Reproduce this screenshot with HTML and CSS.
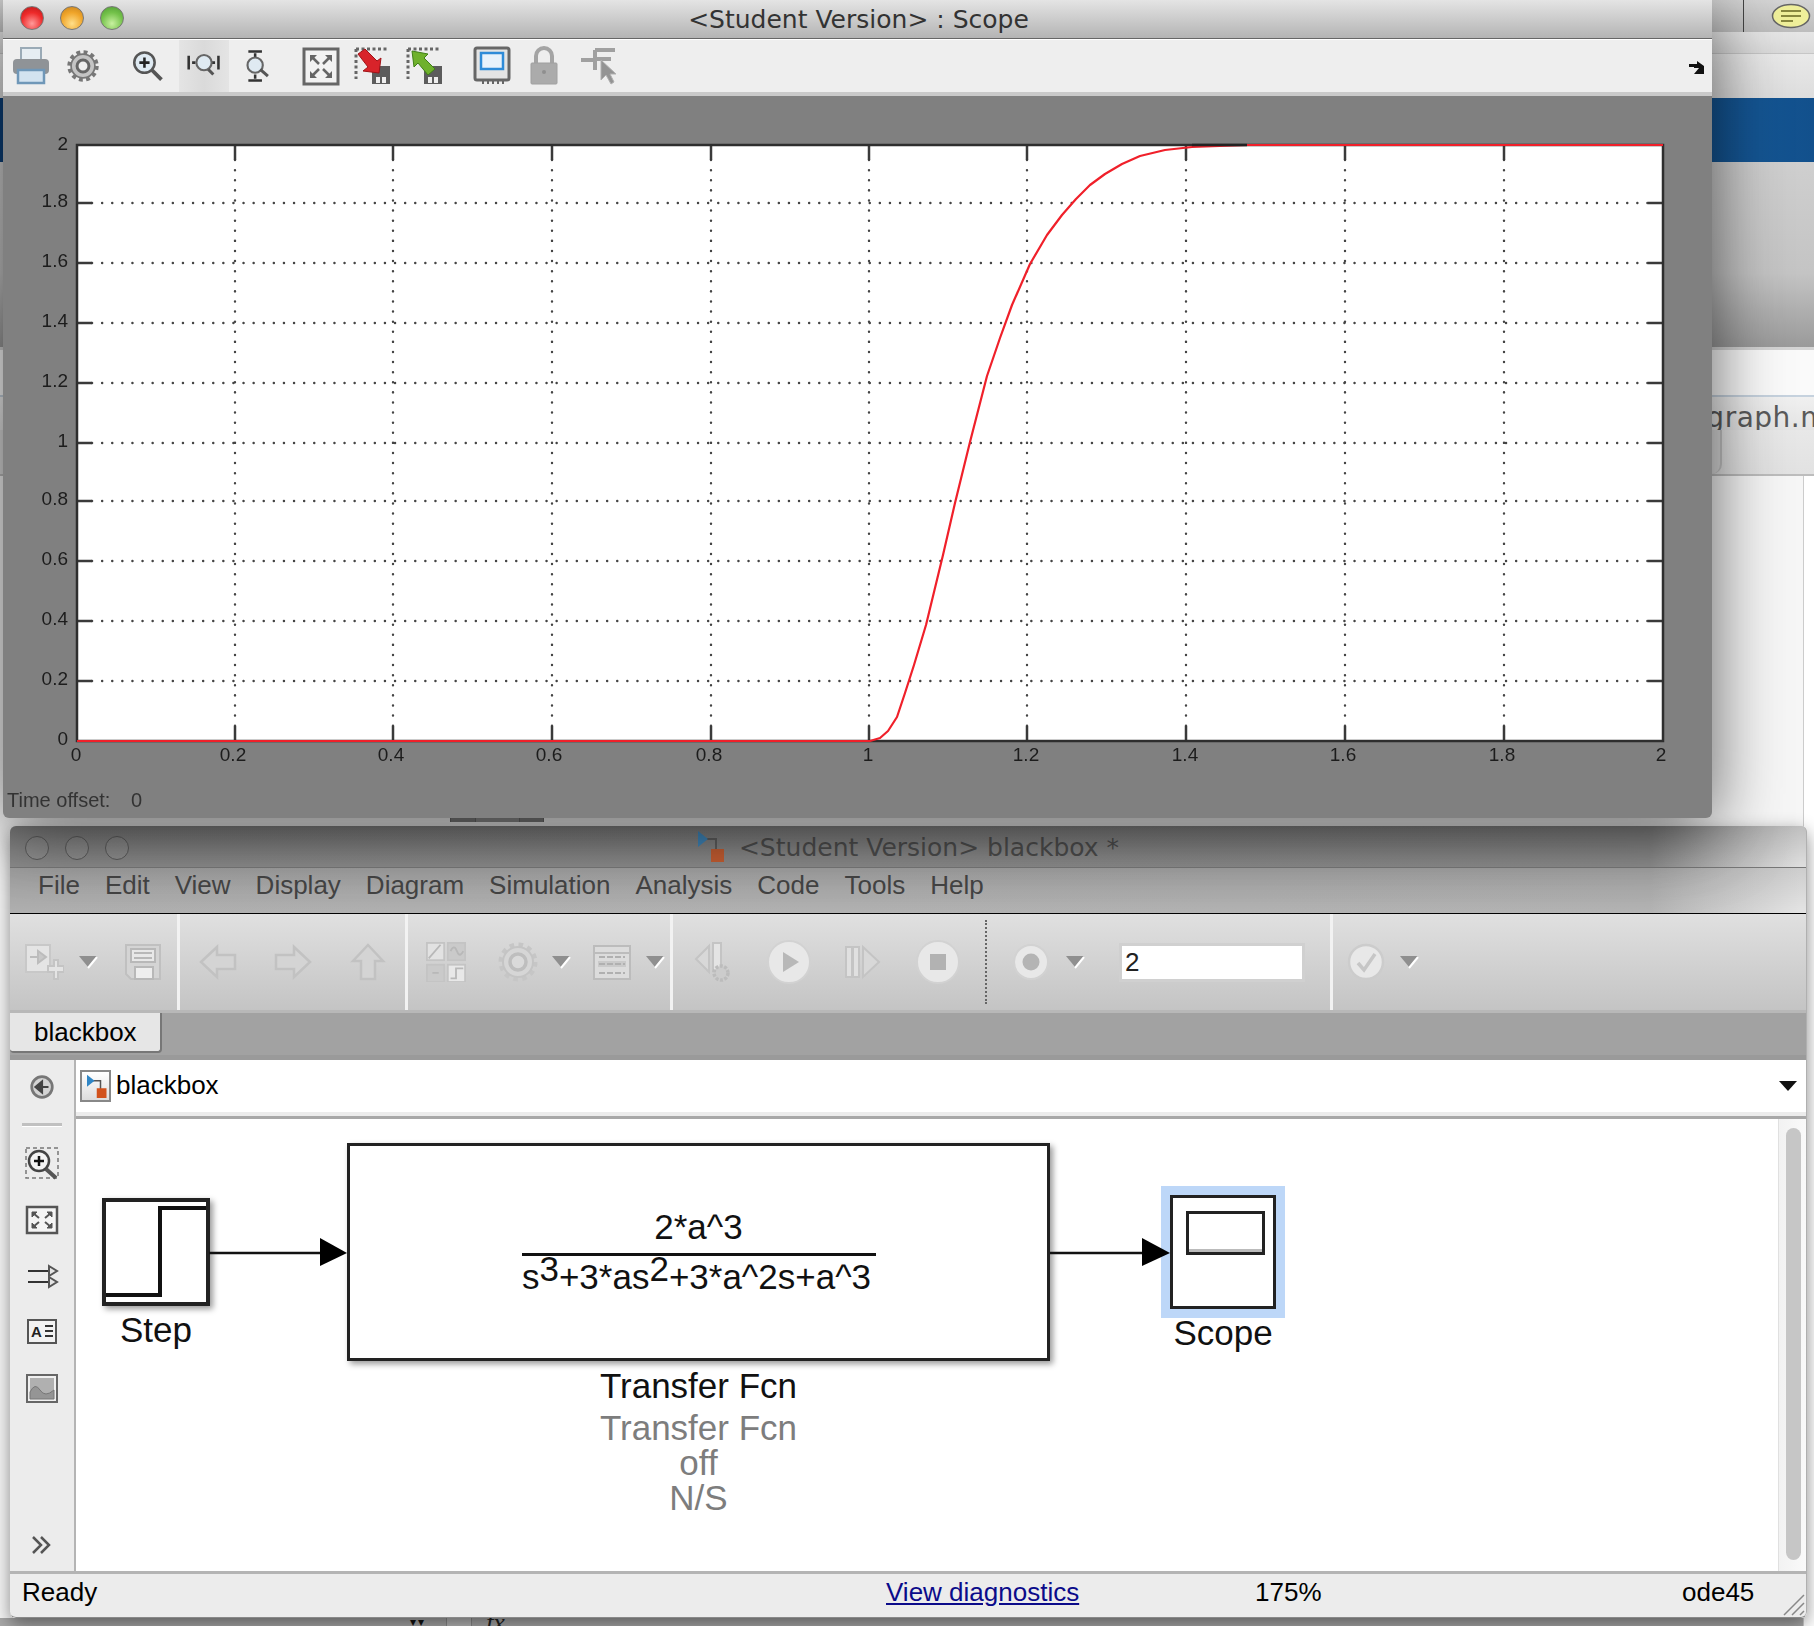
FILE: index.html
```html
<!DOCTYPE html>
<html lang="en">
<head>
    <meta charset="UTF-8">
    <title>blackbox - Scope</title>
    <link rel="stylesheet" href="styles.css">
</head>
<body>
    <svg class="defs" width="0" height="0">
        <defs>
            <symbol id="drop" viewBox="0 0 20 14">
                <polygon points="1,1 19,1 10,12" fill="#8f8f8f"/>
                <polyline points="19,2 10,13" fill="none" stroke="#fff" stroke-width="2"/>
            </symbol>
            <symbol id="model" viewBox="0 0 32 32">
                <path d="M8 9H22V20" fill="none" stroke="#555" stroke-width="2"/>
                <polygon points="4,1 14,9 4,17" fill="#2f86c6"/>
                <rect x="17" y="19" width="13" height="13" fill="#d2521c"/>
            </symbol>
            <symbol id="rulers" viewBox="0 0 40 40">
                <path d="M3 3H36M3 3V33" fill="none" stroke="#666" stroke-width="3" stroke-dasharray="3 2.5"/>
                <rect x="19" y="20" width="18" height="18" fill="#5c5c5c"/>
                <rect x="23" y="31" width="4" height="6" fill="#eee"/>
                <rect x="29" y="31" width="4" height="6" fill="#eee"/>
            </symbol>
        </defs>
    </svg>

    <!-- window behind the two simulink windows -->
    <div class="backwin">
        <div class="back-top">
            <span class="back-rule"></span>
            <svg class="note" width="40" height="26" viewBox="0 0 40 26">
                <ellipse cx="20" cy="13" rx="18.5" ry="11.5" fill="#efef9a" stroke="#666" stroke-width="1.5"/>
                <path d="M10 8H30M10 13H30M10 18H22" stroke="#88883f" stroke-width="2"/>
            </svg>
        </div>
        <div class="back-strip1"></div>
        <div class="back-strip2"></div>
        <div class="back-blue"></div>
        <div class="back-gray"></div>
        <div class="back-white"></div>
        <div class="back-file"><span class="filename">graph.m</span></div>
        <div class="back-tabs"><span class="back-tab"></span></div>
        <div class="back-body">
            <div class="frag-row">
                <span class="frag frag-a"></span>
                <span class="frag frag-b"></span>
            </div>
            <div class="frag-bottom">
                <span class="frag-down">▾▾</span>
                <span class="frag-cell"></span>
                <span class="frag-fx">fx</span>
            </div>
        </div>
    </div>

    <!-- blackbox model window -->
    <div class="window model-win">
        <div class="model-title">
            <div class="lights">
                <span class="light dim"></span>
                <span class="light dim"></span>
                <span class="light dim"></span>
            </div>
            <div class="model-caption">
                <svg class="icon-title" width="32" height="32"><use href="#model"/></svg>
                <span>&lt;Student Version&gt; blackbox *</span>
            </div>
        </div>
        <div class="menubar">
            <span>File</span><span>Edit</span><span>View</span><span>Display</span><span>Diagram</span>
            <span>Simulation</span><span>Analysis</span><span>Code</span><span>Tools</span><span>Help</span>
        </div>

        <div class="toolbar">
            <div class="tgroup g1">
                <svg class="ico" viewBox="0 0 40 40"><path d="M2 3H26V30H2Z" fill="#e4e4e4" stroke="#c8c8c8" stroke-width="2"/><path d="M6 15H14M14 9V21L22 15Z" fill="#c8c8c8" stroke="#bcbcbc" stroke-width="2"/><path d="M24 24H30V18H34V24H40V30H34V37H30V30H24Z" fill="#e4e4e4" stroke="#c4c4c4" stroke-width="2"/></svg>
                <svg class="drop"><use href="#drop"/></svg>
                <svg class="ico ml-save" viewBox="0 0 40 40"><path d="M3 3H37V37H8L3 32Z" fill="#d4d4d4" stroke="#c0c0c0" stroke-width="2"/><rect x="8" y="7" width="24" height="13" fill="#e8e8e8" stroke="#b8b8b8" stroke-width="2"/><path d="M11 11H29M11 16H29" stroke="#b8b8b8" stroke-width="2"/><rect x="12" y="25" width="18" height="12" fill="#eee" stroke="#b8b8b8" stroke-width="2"/></svg>
            </div>
            <div class="tgroup g2">
                <svg class="ico" viewBox="0 0 40 40"><path d="M3 20L19 5V13H37V27H19V35Z" fill="#d4d4d4" stroke="#c2c2c2" stroke-width="2.5"/></svg>
                <svg class="ico" viewBox="0 0 40 40"><path d="M37 20L21 5V13H3V27H21V35Z" fill="#d4d4d4" stroke="#c2c2c2" stroke-width="2.5"/></svg>
                <svg class="ico" viewBox="0 0 40 40"><path d="M20 3L35 19H27V37H13V19H5Z" fill="#d4d4d4" stroke="#c2c2c2" stroke-width="2.5"/></svg>
            </div>
            <div class="tgroup g3">
                <svg class="ico" viewBox="0 0 44 44"><rect x="1" y="1" width="19" height="19" fill="#e2e2e2" stroke="#c4c4c4" stroke-width="2"/><rect x="24" y="1" width="19" height="19" fill="#cacaca" stroke="#c4c4c4" stroke-width="2"/><rect x="1" y="25" width="19" height="19" fill="#cacaca" stroke="#c4c4c4" stroke-width="2"/><rect x="24" y="25" width="19" height="19" fill="#e8e8e8" stroke="#c4c4c4" stroke-width="2"/><path d="M3 18L16 3M27 10Q31 2 34 10T41 10M7 34H14M27 40H33V29H41" fill="none" stroke="#b8b8b8" stroke-width="2"/></svg>
                <svg class="ico ml-gear" viewBox="0 0 40 40"><circle cx="20" cy="20" r="17" fill="none" stroke="#c6c6c6" stroke-width="5" stroke-dasharray="4.5 4.4"/><circle cx="20" cy="20" r="15" fill="#d6d6d6" stroke="#c4c4c4" stroke-width="2"/><circle cx="20" cy="20" r="8" fill="#dadada" stroke="#bebebe" stroke-width="3.5"/></svg>
                <svg class="drop"><use href="#drop"/></svg>
                <svg class="ico ml-table" viewBox="0 0 40 40"><rect x="2" y="4" width="36" height="33" fill="#dcdcdc" stroke="#bcbcbc" stroke-width="2"/><path d="M2 11H38" stroke="#bcbcbc" stroke-width="2"/><rect x="6" y="19" width="28" height="6" fill="#cacaca"/><path d="M7 15H33M7 31H33M7 22H33" fill="none" stroke="#b0b0b0" stroke-width="2" stroke-dasharray="6 2"/></svg>
                <svg class="drop"><use href="#drop"/></svg>
            </div>
            <div class="tgroup g4">
                <svg class="ico" viewBox="0 0 40 40"><path d="M2 17L15 4V30Z" fill="#d8d8d8" stroke="#c4c4c4" stroke-width="2"/><rect x="19" y="1" width="8" height="28" fill="#e4e4e4" stroke="#c4c4c4" stroke-width="2"/><circle cx="27" cy="31" r="7" fill="#cccccc" stroke="#bcbcbc" stroke-width="3.5" stroke-dasharray="3 1.5"/></svg>
                <svg class="roundbtn" viewBox="0 0 44 44"><circle cx="22" cy="22" r="21" fill="#e8e8e8" stroke="#d2d2d2" stroke-width="2"/><polygon points="16,12 32,22 16,32" fill="#b8b8b8"/></svg>
                <svg class="ico ml-step" viewBox="0 0 40 40"><rect x="3" y="5" width="6" height="30" fill="#e0e0e0" stroke="#c4c4c4" stroke-width="2"/><rect x="10" y="5" width="6" height="30" fill="#e0e0e0" stroke="#c4c4c4" stroke-width="2"/><path d="M20 5L36 20L20 35Z" fill="#d8d8d8" stroke="#c4c4c4" stroke-width="2"/></svg>
                <svg class="roundbtn ml-stop" viewBox="0 0 44 44"><circle cx="22" cy="22" r="21" fill="#e8e8e8" stroke="#d2d2d2" stroke-width="2"/><rect x="14" y="14" width="16" height="16" fill="#b2b2b2"/></svg>
                <span class="dots"></span>
                <svg class="ico ml-rec" viewBox="0 0 40 40"><circle cx="20" cy="20" r="17" fill="#e8e8e8" stroke="#d2d2d2" stroke-width="2"/><circle cx="20" cy="20" r="8.5" fill="#b4b4b4"/></svg>
                <svg class="drop ml-drop"><use href="#drop"/></svg>
                <div class="stoptime">2</div>
            </div>
            <div class="tgroup g5">
                <svg class="ico" viewBox="0 0 40 40"><circle cx="20" cy="20" r="17" fill="#e8e8e8" stroke="#cccccc" stroke-width="2.5"/><path d="M12 21L18 28L29 12" fill="none" stroke="#c6c6c6" stroke-width="3.5"/></svg>
                <svg class="drop"><use href="#drop"/></svg>
            </div>
        </div>

        <div class="tabbar"><div class="tab">blackbox</div></div>

        <div class="main">
            <div class="rail">
                <svg class="rail-back" viewBox="0 0 24 24"><circle cx="12" cy="12" r="9.5" fill="#d4d4d4" stroke="#777" stroke-width="2.5"/><path d="M18 12H11M12 7L6 12L12 17Z" fill="#444" stroke="#444" stroke-width="2"/></svg>
                <span class="rail-sep"></span>
                <svg class="rail-ico" viewBox="0 0 36 36"><rect x="2" y="2" width="32" height="30" fill="none" stroke="#777" stroke-width="1.5" stroke-dasharray="4 3"/><circle cx="15" cy="15" r="10" fill="#f4f4f4" stroke="#444" stroke-width="2.5"/><path d="M10 15H20M15 10V20" stroke="#111" stroke-width="2.5"/><path d="M22 23L32 32" stroke="#555" stroke-width="4"/></svg>
                <svg class="rail-ico" viewBox="0 0 36 36"><rect x="3" y="5" width="30" height="26" fill="#f4f4f4" stroke="#555" stroke-width="2.5"/><path d="M8 10H13L8 15ZM28 10H23L28 15ZM8 26H13L8 21ZM28 26H23L28 21Z" fill="#555" stroke="#555"/><path d="M9 11L15 16M27 11L21 16M9 25L15 20M27 25L21 20" stroke="#555" stroke-width="2"/></svg>
                <svg class="rail-ico" viewBox="0 0 36 36"><path d="M4 13H28M4 24H28" stroke="#333" stroke-width="2"/><path d="M25 8L33 13L25 18ZM25 19L33 24L25 29Z" fill="#e4e4e4" stroke="#555" stroke-width="2"/></svg>
                <svg class="rail-ico" viewBox="0 0 36 36"><rect x="4" y="6" width="28" height="23" fill="#f2f2f2" stroke="#555" stroke-width="2"/><text class="rail-a" x="7" y="23">A</text><path d="M21 12H29M21 17H29M21 22H29" stroke="#333" stroke-width="2"/></svg>
                <svg class="rail-ico" viewBox="0 0 36 36"><rect x="3" y="5" width="30" height="27" fill="#f0f0f0" stroke="#666" stroke-width="2"/><rect x="6" y="8" width="24" height="21" fill="#b0b0b0"/><path d="M6 22Q11 12 16 20T30 20V29H6Z" fill="#959595" stroke="#777"/></svg>
                <svg class="rail-more" viewBox="0 0 24 24"><path d="M3 4L11 12L3 20M11 4L19 12L11 20" fill="none" stroke="#555" stroke-width="2.5"/></svg>
            </div>

            <div class="work">
                <div class="address">
                    <span class="addr-icon"><svg width="24" height="24"><use href="#model"/></svg></span>
                    <span class="addr-name">blackbox</span>
                    <svg class="addr-drop" width="18" height="10"><polygon points="0,0 18,0 9,10" fill="#111"/></svg>
                </div>
                <div class="canvas-row">
                    <div class="canvas">
                        <svg class="wires" width="1200" height="300">
                            <path d="M133 135H246M974 135H1068" stroke="#111" stroke-width="2.5"/>
                            <polygon points="244,120 271,135 244,148" fill="#000"/>
                            <polygon points="1066,120 1094,135 1066,148" fill="#000"/>
                        </svg>
                        <div class="node step-node">
                            <div class="block step-block">
                                <svg width="100" height="100" viewBox="0 0 100 100">
                                    <path d="M0 93H54V6H100" fill="none" stroke="#111" stroke-width="4"/>
                                </svg>
                            </div>
                            <div class="label">Step</div>
                        </div>
                        <div class="node tf-node">
                            <div class="block tf-block">
                                <div class="num">2*a^3</div>
                                <div class="den">s<sup>3</sup>+3*as<sup>2</sup>+3*a^2s+a^3</div>
                            </div>
                            <div class="label tf-label">Transfer Fcn</div>
                            <div class="label note-label first">Transfer Fcn</div>
                            <div class="label note-label">off</div>
                            <div class="label note-label">N/S</div>
                        </div>
                        <div class="node scope-node">
                            <div class="block scope-block"><div class="scope-screen"></div></div>
                            <div class="label">Scope</div>
                        </div>
                    </div>
                    <div class="scrollbar"><div class="thumb"></div></div>
                </div>
            </div>
        </div>

        <div class="statusbar">
            <span class="status-ready">Ready</span>
            <a class="diag" href="#">View diagnostics</a>
            <span>175%</span>
            <span>ode45</span>
            <svg class="grip" width="24" height="24" viewBox="0 0 24 24"><path d="M2 22L22 2M10 22L22 10M18 22L22 18" stroke="#888" stroke-width="1.5"/></svg>
        </div>
    </div>

    <!-- scope window, on top -->
    <div class="window scope-win">
        <div class="scope-title">
            <div class="lights">
                <span class="light red"></span>
                <span class="light orange"></span>
                <span class="light green"></span>
            </div>
            <span class="scope-caption">&lt;Student Version&gt; : Scope</span>
        </div>
        <div class="scope-tools">
            <svg class="ico" viewBox="0 0 40 40"><rect x="10" y="2" width="20" height="14" fill="#e6edf2" stroke="#9aaab6" stroke-width="2"/><rect x="2" y="13" width="36" height="15" rx="4" fill="#8f9397"/><rect x="7" y="24" width="26" height="13" fill="#d3e3f0" stroke="#6f97b8" stroke-width="2.5"/></svg>
            <svg class="ico ico-sm" viewBox="0 0 40 40"><circle cx="20" cy="20" r="16" fill="none" stroke="#777" stroke-width="5" stroke-dasharray="4.5 3.9"/><circle cx="20" cy="20" r="14" fill="#c4c4c4" stroke="#777" stroke-width="2"/><circle cx="20" cy="20" r="7" fill="#efefef" stroke="#666" stroke-width="3.5"/></svg>
            <svg class="ico ico-sm tools-gap" viewBox="0 0 40 40"><circle cx="17" cy="16" r="12" fill="#dfeaf2" stroke="#555" stroke-width="3"/><path d="M11 16H23M17 10V22" stroke="#222" stroke-width="3"/><path d="M26 25L37 36" stroke="#555" stroke-width="4.5"/></svg>
            <span class="pressed">
                <svg class="ico ico-sm" viewBox="0 0 40 40"><path d="M2 8V24M37 8V24" stroke="#333" stroke-width="3"/><path d="M6 16H10M29 16H33" stroke="#333" stroke-width="3"/><circle cx="20" cy="16" r="9" fill="#dfeaf2" stroke="#666" stroke-width="2.5"/><path d="M25 24L31 30" stroke="#555" stroke-width="3.5"/></svg>
            </span>
            <svg class="ico ico-sm" viewBox="0 0 40 40"><path d="M11 3H27M11 37H27" stroke="#333" stroke-width="3"/><path d="M19 5V10M19 30V35" stroke="#333" stroke-width="3"/><circle cx="19" cy="19" r="9" fill="#dfeaf2" stroke="#666" stroke-width="2.5"/><path d="M25 24L34 32" stroke="#555" stroke-width="3.5"/></svg>
            <svg class="ico tools-gap2" viewBox="0 0 40 40"><rect x="3" y="3" width="34" height="35" fill="#f2f2f2" stroke="#666" stroke-width="3"/><path d="M9 9H16L9 16ZM31 9H24L31 16ZM9 32H16L9 25ZM31 32H24L31 25Z" fill="#666"/><path d="M10 10L18 18M30 10L22 18M10 31L18 23M30 31L22 23" stroke="#666" stroke-width="2.5"/></svg>
            <svg class="ico" viewBox="0 0 40 40"><use href="#rulers"/><path d="M5 8L12 3L24 15L28 12L26 27L10 25L15 21Z" fill="#d8232a" stroke="#a01217"/></svg>
            <svg class="ico" viewBox="0 0 40 40"><use href="#rulers"/><path d="M7 5L23 8L19 12L30 23L23 29L13 17L9 21Z" fill="#6fb12c" stroke="#3f7f17"/></svg>
            <svg class="ico tools-gap" viewBox="0 0 40 40"><rect x="3" y="2" width="34" height="32" rx="2" fill="#e4e4e4" stroke="#666" stroke-width="3"/><rect x="9" y="7" width="22" height="16" fill="#e8f2fb" stroke="#2e8bd8" stroke-width="2.5"/><path d="M11 34V38M16 34V38M21 34V38M26 34V38M31 34V38" stroke="#666" stroke-width="2"/></svg>
            <svg class="ico" viewBox="0 0 40 40"><path d="M12 18V10A8 8 0 0 1 28 10V18" fill="none" stroke="#a4a4a4" stroke-width="4"/><rect x="7" y="17" width="26" height="21" rx="1" fill="#ababab" stroke="#a0a0a0"/><circle cx="20" cy="26" r="2" fill="#8f8f8f"/></svg>
            <svg class="ico tools-gap3" viewBox="0 0 40 40"><path d="M2 14H16M16 4H36M16 4V24M16 13H32" fill="none" stroke="#a0a0a0" stroke-width="4"/><path d="M22 14V34L27 29L32 38L35 36L31 28H37Z" fill="#939393" stroke="#b0b0b0"/></svg>
            <svg class="dock" width="18" height="16" viewBox="0 0 18 16"><path d="M1 4H9V1L16 6V14H6L11 8H6V7H1Z" fill="#111"/></svg>
        </div>
        <div class="figure">
            <svg class="plot" width="1709" height="722" viewBox="3 96 1709 722">
                <rect x="77" y="145" width="1586" height="596" fill="#fff"/>
                <path class="grid" d="M235 160V726M393 160V726M552 160V726M711 160V726M869 160V726M1027 160V726M1186 160V726M1345 160V726M1504 160V726"/>
                <path class="grid" d="M92 203H1648M92 263H1648M92 323H1648M92 383H1648M92 443H1648M92 501H1648M92 561H1648M92 621H1648M92 681H1648"/>
                <path class="ticks" d="M235 145V160M393 145V160M552 145V160M711 145V160M869 145V160M1027 145V160M1186 145V160M1345 145V160M1504 145V160M235 741V726M393 741V726M552 741V726M711 741V726M869 741V726M1027 741V726M1186 741V726M1345 741V726M1504 741V726"/>
                <path class="ticks" d="M77 203H92M77 263H92M77 323H92M77 383H92M77 443H92M77 501H92M77 561H92M77 621H92M77 681H92M1663 203H1648M1663 263H1648M1663 323H1648M1663 383H1648M1663 443H1648M1663 501H1648M1663 561H1648M1663 621H1648M1663 681H1648"/>
                <rect class="axes" x="77" y="145" width="1586" height="596"/>
                <polyline class="trace" points="77,741 870,741 880,738 888,731 897,717 905,693 914,665 926,625 943,555 955,503 970,442 987,376 1000,338 1012,305 1030,264 1047,235 1062,215 1076,199 1090,185 1105,174 1122,164 1140,156 1165,150 1192,147 1247,145 1663,145"/>
                <path class="axis-dark" d="M1192 145H1247"/>
                <g class="ylabels">
                    <text x="68" y="150">2</text><text x="68" y="207">1.8</text><text x="68" y="267">1.6</text><text x="68" y="327">1.4</text><text x="68" y="387">1.2</text><text x="68" y="447">1</text><text x="68" y="505">0.8</text><text x="68" y="565">0.6</text><text x="68" y="625">0.4</text><text x="68" y="685">0.2</text><text x="68" y="745">0</text>
                </g>
                <g class="xlabels">
                    <text x="76" y="761">0</text><text x="233" y="761">0.2</text><text x="391" y="761">0.4</text><text x="549" y="761">0.6</text><text x="709" y="761">0.8</text><text x="868" y="761">1</text><text x="1026" y="761">1.2</text><text x="1185" y="761">1.4</text><text x="1343" y="761">1.6</text><text x="1502" y="761">1.8</text><text x="1661" y="761">2</text>
                </g>
                <text class="offset" x="7" y="807">Time offset:</text>
                <text class="offset" x="131" y="807">0</text>
            </svg>
        </div>
    </div>
</body>
</html>
```

FILE: styles.css
```css
html, body {
    margin: 0;
    padding: 0;
}
body {
    position: relative;
    width: 1814px;
    height: 1626px;
    overflow: hidden;
    background: #f6f6f6;
    font-family: "Liberation Sans", Arial, sans-serif;
}
svg {
    display: block;
    flex: none;
}
.defs {
    position: absolute;
}

/* window in the back */
.backwin {
    position: absolute;
    inset: 0;
    display: flex;
    flex-direction: column;
}
.back-top {
    height: 32px;
    background: linear-gradient(#d4d4d4, #bdbdbd);
    display: flex;
    justify-content: flex-end;
    align-items: center;
    padding-right: 3px;
}
.back-rule {
    width: 1px;
    height: 32px;
    background: #444;
    margin-right: 27px;
}
.back-strip1 {
    height: 21px;
    background: linear-gradient(#e6e6e6, #dadada);
}
.back-strip2 {
    height: 44px;
    background: linear-gradient(#e9e9e9, #dddddd);
    border-top: 1px solid #c6c6c6;
}
.back-blue {
    height: 64px;
    background: linear-gradient(90deg, #0c3f77, #145593 1760px, #12508c);
}
.back-gray {
    height: 185px;
    background: linear-gradient(#cfcfcf, #c4c4c4 60%, #9a9a9a);
}
.back-white {
    height: 45px;
    background: #fafafa;
    border-top: 3px solid #d4d4d4;
}
.back-file {
    height: 33px;
    background: linear-gradient(#f0f0f0, #e4e4e4);
    border-top: 2px solid #c6d2de;
    display: flex;
    justify-content: flex-end;
}
.filename {
    font-family: "DejaVu Sans", sans-serif;
    font-size: 28px;
    line-height: 33px;
    color: #5a5a5a;
    margin-top: 4px;
    margin-right: -14px;
    letter-spacing: 0.5px;
}
.back-tabs {
    height: 44px;
    background: linear-gradient(#e8e8e8, #e2e2e2);
    border-bottom: 2px solid #bdbdbd;
}
.back-tab {
    display: block;
    width: 1722px;
    height: 44px;
    background: #dcdcdc;
    border-right: 2px solid #c4c4c4;
    border-bottom-right-radius: 10px;
    box-sizing: border-box;
}
.back-body {
    flex: 1;
    background: #f6f6f6;
    position: relative;
    border-right: 10px solid #fff;
    display: flex;
    flex-direction: column;
    justify-content: space-between;
}
.back-body::after {
    content: "";
    position: absolute;
    top: 0;
    bottom: 0;
    right: 0;
    width: 1px;
    background: #ccc;
}
.frag-row {
    display: flex;
    margin-top: 338px;
    margin-left: 450px;
    height: 8px;
    background: #8f8f8f;
    width: 94px;
}
.frag {
    display: block;
    height: 8px;
    border-left: 1px solid #6a6a6a;
    border-right: 1px solid #6a6a6a;
}
.frag-a {
    width: 24px;
    background: #7e7e7e;
}
.frag-b {
    width: 24px;
    margin-left: 43px;
    background: #7e7e7e;
}
.frag-bottom {
    height: 8px;
    background: #a8a8a8;
    display: flex;
    align-items: flex-start;
    overflow: hidden;
    padding-left: 410px;
}
.frag-down {
    font-size: 12px;
    line-height: 8px;
    color: #111;
    letter-spacing: 2px;
}
.frag-cell {
    width: 24px;
    height: 8px;
    margin-left: 20px;
    background: #b8b8b8;
    border-left: 1px solid #8a8a8a;
    border-right: 1px solid #8a8a8a;
}
.frag-fx {
    font-family: "Liberation Serif", serif;
    font-style: italic;
    font-size: 26px;
    line-height: 10px;
    margin-left: 14px;
    color: #222;
}

/* windows */
.window {
    position: absolute;
    display: flex;
    flex-direction: column;
}
.scope-win {
    left: 3px;
    top: 0;
    width: 1709px;
    height: 818px;
    border-radius: 0 0 6px 6px;
    background: #808080;
    box-shadow: 0 10px 70px rgba(0, 0, 0, 0.62);
}
.model-win {
    left: 10px;
    top: 826px;
    width: 1797px;
    height: 792px;
    border-radius: 6px 6px 6px 6px;
    background: #ececec;
    box-shadow: 0 6px 18px rgba(0, 0, 0, 0.45);
    overflow: hidden;
}
.model-win::after {
    content: "";
    position: absolute;
    inset: 0;
    border-radius: 6px;
    border-right: 1px solid #b0b0b0;
    border-bottom: 1px solid #8a8a8a;
    pointer-events: none;
}

/* title bars */
.scope-title {
    height: 38px;
    flex: none;
    position: relative;
    display: flex;
    justify-content: center;
    align-items: center;
    background: linear-gradient(#e4e4e4, #b4b4b4);
    border-bottom: 1px solid #666;
}
.scope-caption {
    font-family: "DejaVu Sans", sans-serif;
    font-size: 25px;
    color: #333;
    margin-left: 2px;
}
.lights {
    position: absolute;
    left: 17px;
    top: 6px;
    display: flex;
    gap: 16px;
}
.light {
    display: block;
    width: 24px;
    height: 24px;
    border-radius: 50%;
    border: 1px solid #777;
    box-sizing: border-box;
}
.red {
    background: radial-gradient(circle at 50% 75%, #ff9a9a, #ee2a2a 55%, #b81818);
}
.orange {
    background: radial-gradient(circle at 50% 75%, #ffdf8a, #f0a52a 55%, #c4801c);
}
.green {
    background: radial-gradient(circle at 50% 75%, #c8f0a0, #74c24a 55%, #4e9a34);
}
.model-title {
    height: 42px;
    flex: none;
    position: relative;
    display: flex;
    justify-content: center;
    align-items: center;
    padding-top: 2px;
    border-bottom: 1px solid #777;
    box-sizing: border-box;
    background:
        linear-gradient(rgba(0, 0, 0, 0.14), rgba(0, 0, 0, 0)),
        linear-gradient(90deg, #8c8c8c, #8e8e8e 1640px, #dedede 1790px);
}
.model-title .lights {
    left: 15px;
    top: 10px;
}
.dim {
    background: rgba(255, 255, 255, 0.06);
    border-color: #5a5a5a;
}
.model-caption {
    display: flex;
    align-items: center;
    gap: 13px;
    font-family: "DejaVu Sans", sans-serif;
    font-size: 25px;
    color: #4c4c4c;
    margin-left: -4px;
}
.icon-title {
    opacity: 0.8;
    margin-top: -4px;
}
.menubar {
    height: 45px;
    flex: none;
    box-sizing: content-box;
    display: flex;
    align-items: center;
    gap: 25px;
    padding-left: 28px;
    font-size: 26px;
    color: #444;
    border-bottom: 1px solid #000;
    background:
        linear-gradient(rgba(0, 0, 0, 0.1), rgba(0, 0, 0, 0)),
        linear-gradient(90deg, #b0b0b0, #b4b4b4 1640px, #e4e4e4 1790px);
}
.menubar span {
    margin-top: -10px;
}

/* toolbars */
.ico {
    width: 40px;
    height: 40px;
}
.ico-sm {
    width: 34px;
    height: 34px;
    margin: 3px;
}
.drop {
    width: 20px;
    height: 14px;
}
.toolbar {
    height: 96px;
    flex: none;
    display: flex;
    background: linear-gradient(#e0e0e0, #c4c4c4);
}
.tgroup {
    display: flex;
    align-items: center;
    border-right: 3px solid #f2f2f2;
    box-sizing: border-box;
}
.g1 {
    width: 170px;
    padding-left: 14px;
    gap: 14px;
}
.ml-save {
    margin-left: 11px;
}
.g2 {
    width: 228px;
    padding-left: 18px;
    gap: 35px;
}
.g3 {
    width: 265px;
    padding-left: 18px;
    gap: 13px;
}
.ml-gear {
    margin-left: 19px;
}
.ml-table {
    margin-left: 8px;
}
.g4 {
    width: 660px;
    padding-left: 21px;
    gap: 33px;
}
.roundbtn {
    width: 44px;
    height: 44px;
}
.ml-step {
    margin-left: -1px;
}
.ml-stop {
    margin-left: 0;
}
.dots {
    display: block;
    height: 84px;
    border-left: 2px dotted #666;
    margin-left: -8px;
}
.ml-rec {
    margin-left: -9px;
}
.ml-drop {
    margin-left: -19px;
}
.stoptime {
    width: 186px;
    height: 39px;
    margin-left: 1px;
    box-sizing: border-box;
    border: 3px solid #d0d0d0;
    background: #fff;
    font-size: 26px;
    line-height: 33px;
    padding-left: 3px;
    color: #222;
}
.g5 {
    flex: 1;
    border-right: 0;
    padding-left: 13px;
    gap: 13px;
}
.scope-tools {
    height: 57px;
    flex: none;
    box-sizing: border-box;
    display: flex;
    align-items: center;
    gap: 12px;
    padding: 0 0 0 8px;
    position: relative;
    background: #eeeeee;
    border-bottom: 4px solid #c9c9c9;
    border-top: 1px solid #fff;
}
.scope-tools svg {
    filter: blur(0.5px);
}
.tools-gap {
    margin-left: 15px;
}
.tools-gap2 {
    margin-left: 13px;
}
.tools-gap3 {
    margin-left: 3px;
}
.pressed {
    display: flex;
    justify-content: center;
    align-items: center;
    width: 50px;
    height: 52px;
    margin-right: -5px;
    background: linear-gradient(90deg, #e4e4e4, #dadada 50%, #e4e4e4);
}
.dock {
    position: absolute;
    right: 6px;
    top: 20px;
}
.figure {
    flex: 1;
}
.plot {
    border-radius: 0 0 6px 6px;
}
.grid {
    fill: none;
    stroke: #444;
    stroke-width: 2.4;
    stroke-linecap: round;
    stroke-dasharray: 0.1 10;
}
.ticks {
    fill: none;
    stroke: #3a3a3a;
    stroke-width: 2.5;
}
.axes {
    fill: none;
    stroke: #2e2e2e;
    stroke-width: 2.5;
}
.trace {
    fill: none;
    stroke: #f0202a;
    stroke-width: 2.2;
    stroke-linejoin: round;
}
.axis-dark {
    stroke: #222;
    stroke-width: 2.5;
}
.ylabels text, .xlabels text {
    font-size: 19px;
    fill: #1c1c1c;
}
.ylabels text {
    text-anchor: end;
}
.xlabels text {
    text-anchor: middle;
}
.ylabels, .xlabels, .offset {
    filter: blur(0.4px);
}
.offset {
    font-size: 20px;
    fill: #333;
}

/* tab and address */
.tabbar {
    height: 50px;
    flex: none;
    box-sizing: border-box;
    background: #a2a2a2;
    border-top: 3px solid #b8b8b8;
    border-bottom: 5px solid #9a9a9a;
}
.tab {
    width: 152px;
    height: 40px;
    box-sizing: border-box;
    background: #e6e6e6;
    border-right: 2px solid #777;
    border-bottom: 2px solid #777;
    border-radius: 0 0 4px 4px;
    font-size: 26px;
    line-height: 38px;
    padding-left: 24px;
    color: #000;
}
.main {
    flex: 1;
    display: flex;
    min-height: 0;
}
.rail {
    width: 66px;
    flex: none;
    box-sizing: border-box;
    display: flex;
    flex-direction: column;
    align-items: center;
    padding: 14px 0 14px;
    gap: 20px;
    background: #ececec;
    border-right: 2px solid #b4b4b4;
}
.rail-back {
    width: 26px;
    height: 26px;
    margin-bottom: 3px;
}
.rail-sep {
    display: block;
    width: 40px;
    height: 3px;
    background: #c0c0c0;
    border-bottom: 1px solid #fff;
    margin-bottom: -1px;
}
.rail-ico {
    width: 36px;
    height: 36px;
}
.rail-a {
    font-size: 15px;
    font-weight: bold;
    fill: #222;
}
.rail-more {
    width: 24px;
    height: 24px;
    margin-top: auto;
}
.work {
    flex: 1;
    min-width: 0;
    display: flex;
    flex-direction: column;
}
.address {
    height: 59px;
    flex: none;
    box-sizing: border-box;
    display: flex;
    align-items: center;
    gap: 5px;
    padding: 0 10px 5px 4px;
    background: #fff;
    border-bottom: 3px solid #a8a8a8;
    box-shadow: inset 0 -4px 0 #ececec;
}
.addr-icon {
    display: flex;
    align-items: center;
    justify-content: center;
    width: 31px;
    height: 32px;
    box-sizing: border-box;
    border: 2px solid #888;
    background: linear-gradient(#fff, #ddd);
}
.addr-name {
    font-size: 26px;
    color: #000;
    flex: 1;
}
.canvas-row {
    flex: 1;
    display: flex;
    min-height: 0;
}
.canvas {
    flex: 1;
    position: relative;
    background: #fff;
}
.scrollbar {
    width: 29px;
    flex: none;
    box-sizing: border-box;
    padding: 9px 6px 11px 7px;
    background: linear-gradient(90deg, #f2f2f2, #fafafa);
    border-left: 1px solid #e0e0e0;
}
.thumb {
    height: 100%;
    border-radius: 8px;
    background: #c6c6c6;
}

/* diagram nodes, canvas starts at 76,1119 of the page */
.wires {
    position: absolute;
    left: 0;
    top: -1px;
    z-index: 1;
}
.node {
    position: absolute;
    display: flex;
    flex-direction: column;
    align-items: center;
}
.block {
    box-sizing: border-box;
    border: 3px solid #222;
    background: #fff;
    box-shadow: 3px 3px 6px rgba(0, 0, 0, 0.4);
}
.step-node {
    left: 26px;
    top: 79px;
    width: 108px;
}
.step-block {
    width: 108px;
    height: 108px;
    border-width: 4px;
}
.tf-node {
    left: 271px;
    top: 24px;
    width: 703px;
}
.tf-block {
    width: 703px;
    height: 218px;
    display: flex;
    flex-direction: column;
    justify-content: center;
    align-items: center;
    font-size: 35px;
    color: #111;
}
.num {
    width: 354px;
    height: 46px;
    line-height: 46px;
    text-align: center;
    border-bottom: 3px solid #111;
    padding-bottom: 3px;
}
.den {
    width: 354px;
    height: 42px;
    line-height: 42px;
    text-align: center;
    margin-bottom: 3px;
    margin-left: -4px;
    white-space: nowrap;
}
.den sup {
    font-size: 100%;
    line-height: 0;
    vertical-align: 8px;
}
.scope-node {
    left: 1094px;
    top: 76px;
    width: 106px;
}
.scope-block {
    width: 106px;
    height: 114px;
    outline: 9px solid #bdd7f8;
    box-shadow: none;
    padding: 13px 8px 0 13px;
}
.scope-screen {
    height: 44px;
    box-sizing: border-box;
    border: 3px solid #222;
    box-shadow: inset 0 -3px 0 #bbb;
}
.label {
    font-size: 35px;
    line-height: 40px;
    color: #111;
    margin-top: 4px;
    white-space: nowrap;
}
.tf-label {
    margin-top: 5px;
}
.note-label {
    color: #7d7d7d;
    line-height: 35px;
    margin-top: 0;
}
.note-label.first {
    margin-top: 4px;
}

/* status bar */
.statusbar {
    height: 47px;
    flex: none;
    box-sizing: border-box;
    position: relative;
    display: grid;
    grid-template-columns: 876px 369px 427px 1fr;
    align-items: center;
    padding-bottom: 8px;
    font-size: 26px;
    color: #000;
    background: #ececec;
    border-top: 3px solid #b4b4b4;
}
.status-ready {
    padding-left: 12px;
}
.diag {
    color: #0b0b8a;
}
.grip {
    position: absolute;
    right: 1px;
    bottom: 1px;
}
```
